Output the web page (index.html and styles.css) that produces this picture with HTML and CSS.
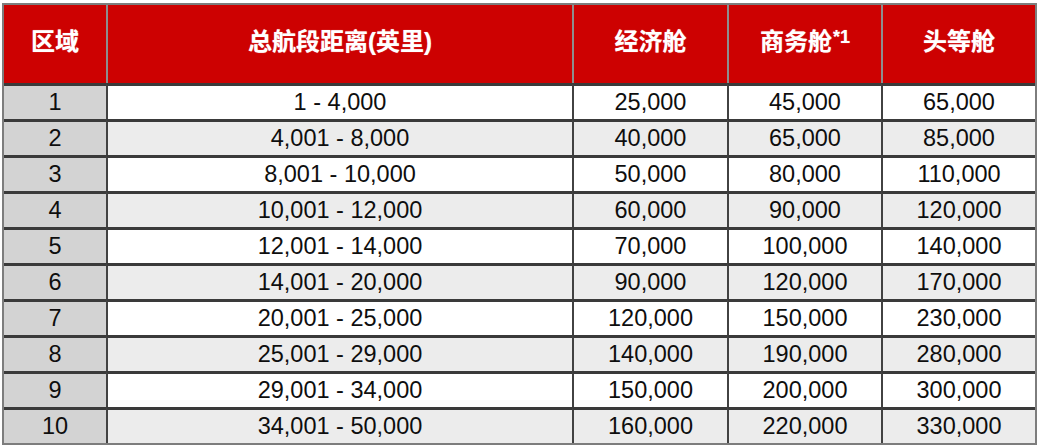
FILE: index.html
```html
<!DOCTYPE html>
<html lang="zh-CN">
<head>
<meta charset="utf-8">
<title>区域里程表</title>
<link rel="stylesheet" href="styles.css">
</head>
<body>
<table class="miles">
  <thead>
    <tr>
      <th class="c1">区域</th>
      <th class="c2">总航段距离(英里)</th>
      <th class="c3">经济舱</th>
      <th class="c4">商务舱<sup class="note">*1</sup></th>
      <th class="c5">头等舱</th>
    </tr>
  </thead>
  <tbody>
    <tr><td class="zone">1</td><td>1 - 4,000</td><td>25,000</td><td>45,000</td><td>65,000</td></tr>
    <tr><td class="zone">2</td><td>4,001 - 8,000</td><td>40,000</td><td>65,000</td><td>85,000</td></tr>
    <tr><td class="zone">3</td><td>8,001 - 10,000</td><td>50,000</td><td>80,000</td><td>110,000</td></tr>
    <tr><td class="zone">4</td><td>10,001 - 12,000</td><td>60,000</td><td>90,000</td><td>120,000</td></tr>
    <tr><td class="zone">5</td><td>12,001 - 14,000</td><td>70,000</td><td>100,000</td><td>140,000</td></tr>
    <tr><td class="zone">6</td><td>14,001 - 20,000</td><td>90,000</td><td>120,000</td><td>170,000</td></tr>
    <tr><td class="zone">7</td><td>20,001 - 25,000</td><td>120,000</td><td>150,000</td><td>230,000</td></tr>
    <tr><td class="zone">8</td><td>25,001 - 29,000</td><td>140,000</td><td>190,000</td><td>280,000</td></tr>
    <tr><td class="zone">9</td><td>29,001 - 34,000</td><td>150,000</td><td>200,000</td><td>300,000</td></tr>
    <tr><td class="zone">10</td><td>34,001 - 50,000</td><td>160,000</td><td>220,000</td><td>330,000</td></tr>
  </tbody>
</table>
</body>
</html>
```

FILE: styles.css
```css
html, body {
  margin: 0;
  padding: 0;
  background: #ffffff;
}

body {
  padding: 3px 0 0 2px;
}

.miles {
  border-collapse: separate;
  border-spacing: 0;
  table-layout: fixed;
  width: 1035px;
  border: 2px solid #7d7d7d;
  font-family: "Liberation Sans", Arial, "Noto Sans CJK SC", sans-serif;
  color: #0e0e0e;
}

.miles th,
.miles td {
  box-sizing: border-box;
  padding: 0;
  text-align: center;
  vertical-align: middle;
}

.miles th {
  height: 78px;
  background: #cd0101;
  color: #ffffff;
  font-family: "Liberation Sans", Arial, "Noto Sans CJK SC", sans-serif;
  font-weight: 700;
  font-size: 24px;
  line-height: 1;
  padding-bottom: 4px;
  border-left: 2px solid #8e8e8e;
  text-shadow: 0 0 1px rgba(255, 255, 255, 0.6);
}

.miles th.c1 { width: 102px; border-left: 0; }
.miles th.c2 { width: 466px; }
.miles th.c3 { width: 155px; }
.miles th.c4 { width: 154px; }
.miles th.c5 { width: 154px; }

.note {
  font-size: 18px;
  vertical-align: 7px;
  line-height: 0;
  margin-left: 1px;
}

.miles td {
  height: 36px;
  font-size: 23.5px;
  line-height: 1;
  border-top: 3px solid #3a3a3a;
  border-left: 2px solid #424242;
  background: #ffffff;
}

.miles tbody tr:nth-child(even) td {
  background: #ececec;
}

.miles td.zone,
.miles tbody tr:nth-child(even) td.zone {
  border-left: 0;
  background: #d3d3d3;
}
```
